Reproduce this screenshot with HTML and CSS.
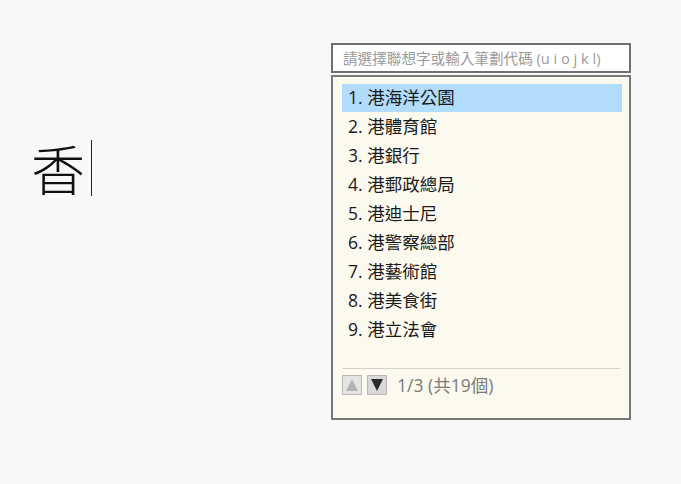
FILE: index.html
```html
<!DOCTYPE html>
<html lang="zh-Hant">
<head>
    <meta charset="UTF-8">
    <meta name="viewport" content="width=device-width, initial-scale=1.0">
    <title>聯想字輸入</title>
    <link rel="stylesheet" href="styles.css">
</head>
<body>
    <div class="page">
        <div class="editor">
            <span class="typed">香</span><span class="caret"></span>
        </div>

        <div class="ime">
            <div class="ime-input">請選擇聯想字或輸入筆劃代碼 (u i o j k l)</div>

            <div class="ime-panel">
                <ul class="candidates">
                    <li class="selected">1. 港海洋公園</li>
                    <li>2. 港體育館</li>
                    <li>3. 港銀行</li>
                    <li>4. 港郵政總局</li>
                    <li>5. 港迪士尼</li>
                    <li>6. 港警察總部</li>
                    <li>7. 港藝術館</li>
                    <li>8. 港美食街</li>
                    <li>9. 港立法會</li>
                </ul>

                <div class="pager">
                    <span class="page-btn disabled">
                        <svg width="14" height="14" viewBox="0 0 14 14"><polygon points="7,1 13,13 1,13"/></svg>
                    </span>
                    <span class="page-btn">
                        <svg width="14" height="14" viewBox="0 0 14 14"><polygon points="1,1 13,1 7,13"/></svg>
                    </span>
                    <span class="page-info">1/3 (共19個)</span>
                </div>
            </div>
        </div>
    </div>
</body>
</html>
```

FILE: styles.css
```css
body {
    margin: 0;
    background-color: #f8f8f8;
    font-family: 'Open Sans', 'Noto Sans CJK TC', sans-serif;
}
.page {
    display: flex;
    padding-top: 43px;
}
.editor {
    width: 300px;
    padding-left: 31px;
    padding-top: 97px;
    display: flex;
    align-items: flex-start;
}
.typed {
    font-family: 'Noto Sans CJK TC', serif;
    font-weight: 300;
    font-size: 54px;
    line-height: 56px;
    color: #111;
}
.caret {
    width: 1px;
    height: 56px;
    margin-left: 6px;
    background-color: #222;
}
.ime {
    width: 300px;
}
.ime-input {
    height: 26px;
    line-height: 26px;
    border: 2px solid #707070;
    background-color: #fff;
    padding-left: 10px;
    font-family: 'Open Sans', 'Noto Sans CJK TC', sans-serif;
    font-size: 14.6px;
    color: #9a9a9a;
    white-space: nowrap;
    overflow: hidden;
}
.ime-panel {
    margin-top: 2px;
    height: 327px;
    border: 2px solid #787878;
    background-color: #fcf9ee;
    padding: 7px 7px 7px 9px;
}
.candidates {
    list-style: none;
    margin: 0;
    padding: 0;
}
.candidates li {
    height: 29px;
    line-height: 27px;
    padding-left: 6px;
    font-size: 17.5px;
    color: #1a1a1a;
}
.candidates li.selected {
    height: 28px;
    margin-bottom: 1px;
    background-color: #b1dcfb;
}
.pager {
    margin-top: 23px;
    margin-right: 2px;
    border-top: 1px solid #d6d3c8;
    padding-top: 3px;
    display: flex;
    align-items: center;
}
.page-btn {
    width: 18px;
    height: 18px;
    border: 1px solid #b8b8b8;
    background-color: #d9d9d9;
    display: flex;
    align-items: center;
    justify-content: center;
    margin-right: 5px;
}
.page-btn svg {
    fill: #2a2a2a;
}
.page-btn.disabled {
    background-color: #e4e4e4;
}
.page-btn.disabled svg {
    fill: #b4b4b4;
}
.page-info {
    margin-left: 5px;
    font-size: 17.5px;
    color: #7a7a7a;
}
```
